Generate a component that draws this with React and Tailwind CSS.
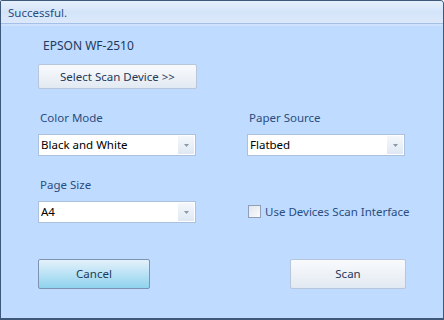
import React from "react";

function Combo({ value }) {
  return (
    <div className="h-[22px] w-[158px] flex items-stretch bg-white border border-[#abc1de]">
      <div className="flex-1 flex items-center pl-[2px] text-[11.5px] text-black leading-none">{value}</div>
      <div className="w-[16px] my-[1px] mr-[1px] flex items-center justify-center bg-gradient-to-b from-[#f4f8fc] to-[#dfe8f3]">
        <svg width="5" height="3" viewBox="0 0 5 3"><path d="M0 0h5L2.5 3z" fill="#8a98a8" /></svg>
      </div>
    </div>
  );
}

function Label({ children }) {
  return <div className="h-[17px] pt-[1px] pl-[2px] text-[11.5px] leading-[16px] text-[#2a4d7f]">{children}</div>;
}

export default function App() {
  return (
    <div
      className="w-[444px] h-[320px] flex flex-col bg-[#bfdbff] border border-b-2 border-[#3d5878] rounded-tr-[4px] rounded-tl-[2px] overflow-hidden"
      style={{ fontFamily: '"Noto Sans", "Open Sans", sans-serif' }}
    >
      <div className="h-[23px] shrink-0 flex items-center pl-[7px] pt-[1px] text-[11.5px] text-[#2a4d7f] bg-gradient-to-b from-[#e6f0fc] via-[#d4e4f9] to-[#dce9fb] border-b border-[#a4c0e6]">
        Successful.
      </div>
      <div className="h-[2px] shrink-0 bg-[#cfe2fd]" />
      <div className="flex flex-col pl-[37px] pt-[12px] text-[11.5px]">
        <div className="h-[16px] pl-[5px] leading-[16px] text-[12px] text-[#1e395b]">EPSON WF-2510</div>
        <button className="mt-[10px] h-[25px] w-[159px] rounded-[2px] border border-[#b7c6da] bg-gradient-to-b from-[#f8fafd] via-[#eef2f7] to-[#e2e9f2] text-[11.5px] text-[#1e395b] flex items-center justify-center">
          Select Scan Device &gt;&gt;
        </button>
        <div className="mt-[20px] grid grid-cols-[158px_158px] gap-x-[51px]">
          <div className="flex flex-col">
            <Label>Color Mode</Label>
            <div className="mt-[8px]"><Combo value="Black and White" /></div>
          </div>
          <div className="flex flex-col">
            <Label>Paper Source</Label>
            <div className="mt-[8px]"><Combo value="Flatbed" /></div>
          </div>
          <div className="flex flex-col mt-[20px]">
            <Label>Page Size</Label>
            <div className="mt-[8px]"><Combo value="A4" /></div>
          </div>
          <div className="flex items-end mt-[20px]">
            <div className="h-[22px] flex items-center pl-[1px] pb-[1px] whitespace-nowrap">
              <div className="w-[13px] h-[13px] shrink-0 border border-[#8e9fb6] bg-gradient-to-br from-[#e2e6ec] to-[#fafbfc]" />
              <span className="ml-[4px] text-[11.5px] text-[#2a4d7f]">Use Devices Scan Interface</span>
            </div>
          </div>
        </div>
        <div className="mt-[36px] w-[368px] flex justify-between">
          <button className="h-[30px] w-[112px] rounded-[2px] border border-[#7d93b2] bg-gradient-to-b from-[#e4f1fa] via-[#b9e2f5] to-[#8fd3ee] text-[11.5px] text-[#1e395b] flex items-center justify-center">
            Cancel
          </button>
          <button className="h-[30px] w-[116px] rounded-[2px] border border-[#b7c6da] bg-gradient-to-b from-[#f8fafd] via-[#eef2f7] to-[#e2e9f2] text-[11.5px] text-[#1e395b] flex items-center justify-center">
            Scan
          </button>
        </div>
      </div>
    </div>
  );
}
